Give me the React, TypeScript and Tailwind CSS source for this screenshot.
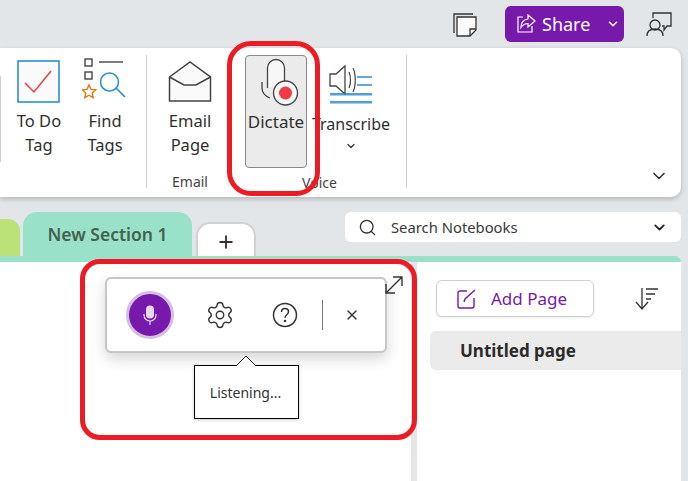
import React from 'react';
import { ChevronDown, X, Plus, Search, Settings } from 'lucide-react';

function RibbonButton({ icon, label, sub, className = '' }: { icon: React.ReactNode; label: string; sub?: string; className?: string }) {
  return (
    <div className={`flex flex-col items-center shrink-0 ${className}`}>
      <div className="h-[54px] flex items-center justify-center">{icon}</div>
      <div className="text-[16.500px] leading-[24px] text-[#2f2f2f] text-center whitespace-nowrap">{label}</div>
      {sub && <div className="text-[16.500px] leading-[24px] text-[#2f2f2f] text-center">{sub}</div>}
    </div>
  );
}

function ToDoIcon() {
  return (
    <svg width="44" height="44" viewBox="0 0 44 44" fill="none">
      <rect x="1" y="1" width="41" height="41" fill="#fafafa" stroke="#2b8fd0" strokeWidth="1.6" />
      <path d="M8 25 L17 34 L34 13" transform="translate(0 -2)" stroke="#ee3b44" strokeWidth="1.5" />
    </svg>
  );
}

function FindTagsIcon() {
  return (
    <svg width="46" height="48" viewBox="0 0 46 48" fill="none">
      <rect x="3" y="1" width="7" height="7" stroke="#444" strokeWidth="1.4" />
      <rect x="3" y="14" width="7" height="7" stroke="#444" strokeWidth="1.4" />
      <path d="M17 4h24" stroke="#444" strokeWidth="1.4" />
      <path d="M7 27l2 4.4 4.6.5-3.4 3.1 1 4.6-4.2-2.4-4.2 2.4 1-4.6L0.4 31.900l4.600-.5z" stroke="#dd7a10" strokeWidth="1.4" />
      <circle cx="27.500" cy="24" r="9" stroke="#2b8fd0" strokeWidth="1.5" />
      <path d="M34 30l9 9" stroke="#2b8fd0" strokeWidth="1.700" />
    </svg>
  );
}

function EmailIcon() {
  return (
    <svg width="44" height="42" viewBox="0 0 44 42" fill="none" stroke="#444" strokeWidth="1.5">
      <path d="M1.500 16 L22 1 L42.500 16 V40 H1.500 Z" fill="#fafafa" />
      <path d="M1.500 16 L16 24 H28 L42.500 16" />
    </svg>
  );
}

function DictateIcon() {
  return (
    <svg width="38" height="50" viewBox="0 0 38 50" fill="none">
      <path d="M6.500 30 V10 a8.500 8.500 0 0 1 17 0 V26" fill="#f7f7f7" stroke="#444" strokeWidth="1.300" />
      <path d="M1 24 V30 c0 4 3 8 8 10" stroke="#444" strokeWidth="1.300" />
      <circle cx="24.500" cy="35" r="12" fill="#f7f7f7" stroke="#444" strokeWidth="1.300" />
      <circle cx="24.500" cy="35" r="6.500" fill="#ee3b44" />
    </svg>
  );
}

function TranscribeIcon() {
  return (
    <svg width="44" height="44" viewBox="0 0 44 44" fill="none">
      <path d="M1 13h6l9-8v28l-9-8H1z" stroke="#444" strokeWidth="1.300" />
      <path d="M20 11c2 4 2 12 0 16M24 7c3 6 3 18 0 24" stroke="#444" strokeWidth="1.200" />
      <path d="M28 16h15M28 24h15" stroke="#2b8fd0" strokeWidth="1.500" />
      <path d="M1 33h42M1 41h42" stroke="#1e7fc4" strokeWidth="1.500" />
      <path d="M1 34.500h42M1 42.500h42" stroke="#9fd0ee" strokeWidth="1" />
    </svg>
  );
}

function TopBar() {
  return (
    <div className="h-[48px] shrink-0 flex items-center justify-end pr-[16px]">
      <svg width="24" height="24" viewBox="0 0 24 24" fill="none" stroke="#333" strokeWidth="1.300" className="mr-[28px] mt-px">
        <path d="M1 20V1h19" />
        <path d="M4 4h19v13l-6 6H4z" fill="#fafafa" />
        <path d="M23 16h-6v7" />
      </svg>
      <div className="w-[119px] h-[36px] rounded-[6px] bg-[#7719aa] flex items-center text-white text-[18px] pl-[12px]">
        <svg width="20" height="20" viewBox="0 0 20 20" fill="none" stroke="#fff" strokeWidth="1.200" className="mr-[5px]">
          <path d="M6 3H1v15h14v-6" />
          <path d="M11 1l7 6-7 6V9.500c-3 0-5 1-7 4 0-5 3-8 7-8.500z" />
        </svg>
        <span>Share</span>
        <ChevronDown size={14} strokeWidth={2.500} className="ml-[16px]" />
      </div>
      <svg width="26" height="26" viewBox="0 0 26 26" fill="none" stroke="#333" strokeWidth="1.300" className="ml-[22px]">
        <path d="M7 7V2h18v13h-4l-3 4v-4h-2" />
        <circle cx="9" cy="14" r="5" fill="#e3e6e9" />
        <path d="M1 25c0-5 3-7 8-7s8 2 8 7" />
      </svg>
    </div>
  );
}

function Ribbon() {
  return (
    <div className="h-[149px] shrink-0 mr-[7px] bg-white rounded-r-[10px] shadow-[0_2px_5px_rgba(0,0,0,0.22)] flex pt-[7px] relative">
      <div className="w-px h-[86px] mt-[21px] bg-[#d0d0d0] shrink-0" />
      <RibbonButton icon={<ToDoIcon />} label="To Do" sub="Tag" className="w-[76px]" />
      <RibbonButton icon={<FindTagsIcon />} label="Find" sub="Tags" className="w-[56px]" />
      <div className="w-px h-[133px] bg-[#d0d0d0] shrink-0 ml-[13px]" />
      <div className="w-[86px] shrink-0 flex flex-col items-center">
        <RibbonButton icon={<EmailIcon />} label="Email" sub="Page" />
        <div className="mt-[15px] text-[14px] leading-[20px] text-[#444]">Email</div>
      </div>
      <div className="w-[173px] shrink-0 flex flex-col">
        <div className="flex h-[113px] pl-[12px]">
          <div className="w-[62px] h-[113px] rounded-[4px] border border-[#8a8a8a] bg-[#ebebeb] flex flex-col items-center">
            <div className="h-[50px] pt-[2px] pl-[8px]"><DictateIcon /></div>
            <div className="mt-[4px] text-[17px] leading-[24px] text-[#2f2f2f]">Dictate</div>
          </div>
          <div className="w-[88px] flex flex-col items-center">
            <div className="h-[52px] pt-[6px]"><TranscribeIcon /></div>
            <div className="mt-[5px] text-[16px] leading-[24px] text-[#2f2f2f] whitespace-nowrap">Transcribe</div>
            <ChevronDown size={12} strokeWidth={2.500} className="mt-[4px] text-[#333]" />
          </div>
        </div>
        <div className="mt-[5px] text-center text-[14px] leading-[20px] text-[#444]">Voice</div>
      </div>
      <div className="w-px h-[133px] bg-[#d0d0d0] shrink-0" />
      <ChevronDown size={20} strokeWidth={2} className="absolute right-[12px] bottom-[11px] text-[#333]" />
    </div>
  );
}

function TabRow() {
  return (
    <div className="h-[59px] shrink-0 flex items-end relative pr-[7px]">
      <div className="w-[20px] h-[37px] bg-[#bbe278] rounded-tr-[12px]" />
      <div className="ml-[3px] w-[169px] h-[44px] bg-[#9ae1c9] rounded-t-[14px] text-[#44614f] font-semibold text-[17.500px] leading-[20px] text-center pt-[12px]">New Section 1</div>
      <div className="ml-[4px] w-[60px] h-[34px] pt-[4px] bg-white border-2 border-b-0 border-[#d2d2d2] rounded-t-[14px] flex items-center justify-center">
        <Plus size={20} strokeWidth={2.200} className="text-[#333]" />
      </div>
      <div className="absolute right-[7px] top-[15px] w-[336px] h-[30px] bg-white rounded-[6px] flex items-center pl-[13px] pr-[13px]">
        <Search size={19} strokeWidth={1.700} className="text-[#333]" />
        <span className="ml-[14px] text-[14.800px] text-[#3a3a3a] flex-1">Search Notebooks</span>
        <ChevronDown size={17} strokeWidth={2.500} className="text-[#222]" />
      </div>
    </div>
  );
}

function Content() {
  return (
    <div className="flex-1 min-h-0 flex mr-[7px] border-t-[6px] border-[#9ae1c9] rounded-tr-[6px] bg-white">
      <div className="w-[411px] shrink-0 bg-white" />
      <div className="w-[6px] shrink-0 bg-[#e6e6e6]" />
      <div className="flex-1 min-w-0 pl-[19px] pt-[18px]">
        <div className="flex items-center">
          <div className="w-[158px] h-[37px] border border-[#cfcfcf] rounded-[6px] shadow-[0_1px_3px_rgba(0,0,0,0.08)] flex items-center pl-[20px] text-[#7719aa] text-[17px]">
            <svg width="20" height="20" viewBox="0 0 20 20" fill="none" stroke="#7719aa" strokeWidth="1.400" className="mr-[14px]">
              <path d="M10 2H3a2 2 0 0 0-2 2v13a2 2 0 0 0 2 2h12a2 2 0 0 0 2-2V9" />
              <path d="M7 13l1-3 10-9" />
            </svg>
            Add Page
          </div>
          <svg width="24" height="24" viewBox="0 0 24 24" fill="none" stroke="#333" strokeWidth="1.300" className="ml-[41px]">
            <path d="M7 1v20M1 15l6 7 6-7" />
            <path d="M11 2h12M11 7h9M11 12h5" />
          </svg>
        </div>
        <div className="mt-[14px] -ml-[6px] h-[39px] bg-[#ebebeb] rounded-l-[6px] flex items-center pl-[30px] font-bold text-[17px] text-[#2b2b2b]">Untitled page</div>
      </div>
    </div>
  );
}

function DictationBar() {
  return (
    <>
      <div className="absolute left-[105px] top-[277px] w-[282px] h-[76px] bg-white border-2 border-[#c6c6c6] rounded-[6px] shadow-[0_6px_14px_rgba(0,0,0,0.16)] flex items-center">
        <div className="ml-[19px] w-[48px] h-[48px] rounded-full bg-[#7719aa] border-[3px] border-[#d6bde6] flex items-center justify-center">
          <svg width="14" height="20" viewBox="0 0 14 20" fill="none">
            <rect x="3" y="0.500" width="8" height="13" rx="4" fill="#e9d9f3" />
            <path d="M1 9v1a6 6 0 0 0 12 0V9M7 16v4" stroke="#e9d9f3" strokeWidth="1.200" />
          </svg>
        </div>
        <Settings size={30} strokeWidth={1.100} className="ml-[31px] text-[#333]" />
        <svg width="26" height="26" viewBox="0 0 26 26" fill="none" stroke="#333" strokeWidth="1.500" className="ml-[37px]">
          <circle cx="13" cy="13" r="11.500" />
          <path d="M9.500 10c0-2 1.500-3.500 3.500-3.500s3.500 1.400 3.500 3.300c0 3-3.500 3-3.500 6" />
          <circle cx="13" cy="19" r="0.600" fill="#333" />
        </svg>
        <div className="ml-[24px] w-px h-[30px] bg-[#777]" />
        <X size={16} strokeWidth={2} className="ml-[21px] text-[#333]" />
      </div>
      <svg width="18" height="18" viewBox="0 0 18 18" fill="none" stroke="#333" strokeWidth="1.400" className="absolute left-[385px] top-[276px]">
        <path d="M1 17L17 1M8 1h9v9M1 8v9h9" />
      </svg>
      <div className="absolute left-[194px] top-[365px] w-[105px] h-[54px] pr-[2px] bg-white border border-black shadow-[0_1px_3px_rgba(0,0,0,0.2)] flex items-center justify-center text-[14px] text-[#333]">Listening...</div>
      <svg width="20" height="10" viewBox="0 0 20 10" className="absolute left-[236px] top-[356px]">
        <path d="M0 10 L10 0 L20 10" fill="#fff" stroke="#222" strokeWidth="1" />
      </svg>
    </>
  );
}

export default function App() {
  return (
    <div className="relative w-[688px] h-[481px] overflow-hidden bg-[#e3e6e9] flex flex-col font-['Noto_Sans',sans-serif]">
      <TopBar />
      <Ribbon />
      <TabRow />
      <Content />
      <DictationBar />
      {/* red annotation outlines */}
      <div className="absolute left-[227px] top-[41px] w-[93px] h-[155px] border-[5px] border-[#ed1c24] rounded-[24px]" />
      <div className="absolute left-[80px] top-[259px] w-[337px] h-[181px] border-[5px] border-[#ed1c24] rounded-[20px]" />
    </div>
  );
}
